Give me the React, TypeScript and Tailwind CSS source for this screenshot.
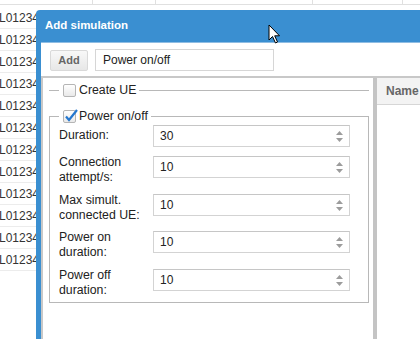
import React from 'react';

const bgRows = Array.from({ length: 12 });

const Checkbox: React.FC<{ checked?: boolean }> = ({ checked }) => (
  <span className="relative inline-block w-[13px] h-[13px] border border-[#b5b5b5] rounded-[2px] bg-gradient-to-b from-[#ffffff] to-[#e9e9e9]">
    {checked && (
      <svg className="absolute left-[0px] top-[-3px]" width="15" height="15" viewBox="0 0 15 15">
        <path d="M2 8.5 L5 12 L13 2" fill="none" stroke="#2477cf" strokeWidth="2.2" />
      </svg>
    )}
  </span>
);

const Spinner: React.FC<{ value: string }> = ({ value }) => (
  <div className="w-[197px] h-[22px] border border-[#d3d3d3] border-t-[#c6c6c6] flex items-center justify-between pl-[6px] pr-[6px] text-[12px] text-[#222]">
    <span>{value}</span>
    <svg width="7" height="11" viewBox="0 0 7 11">
      <polygon points="3.5,0 7,4 0,4" fill="#9c9c9c" />
      <polygon points="0,7 7,7 3.5,11" fill="#9c9c9c" />
    </svg>
  </div>
);

const fields = [
  { label: ['Duration:'], value: '30', h: 'h-[31px]' },
  { label: ['Connection', 'attempt/s:'], value: '10', h: 'h-[38px]' },
  { label: ['Max simult.', 'connected UE:'], value: '10', h: 'h-[37px]' },
  { label: ['Power on', 'duration:'], value: '10', h: 'h-[38px]' },
  { label: ['Power off', 'duration:'], value: '10', h: 'h-[22px]' },
];

export default function App() {
  return (
    <div className="relative w-[420px] h-[339px] overflow-hidden bg-white font-['Liberation_Sans',Arial,sans-serif]">
      {/* Grid behind the window */}
      <div>
        <div className="h-[5px] flex border-b border-[#e0e0e0]">
          <div className="w-[93px] border-r border-[#e0e0e0]" />
          <div className="w-[63px] border-r border-[#e0e0e0]" />
          <div className="w-[157px] border-r border-[#e0e0e0]" />
          <div className="w-[90px] border-r border-[#e0e0e0]" />
        </div>
        {bgRows.map((_, i) => (
          <div
            key={i}
            className={`${i === 0 ? 'h-[24px] pt-[2px]' : 'h-[22px]'} flex items-center border-b border-[#ececec] text-[12px] text-[#333] whitespace-nowrap`}
          >
            <span className="-ml-[1px]">L01234</span>
          </div>
        ))}
      </div>

      {/* Add simulation window */}
      <div className="absolute left-[36px] top-[10px] w-[400px] h-[329px] bg-[#3a8fd1] rounded-tl-[4px] pl-[5px] flex flex-col">
        <div className="h-[33px] flex items-center pl-[4px] text-white font-bold text-[11.5px] border-b border-[#8fbde3]">
          Add simulation
        </div>
        <div className="flex-1 bg-white flex flex-col">
          <div className="h-[33px] flex items-start pt-[6px] pl-[9px] gap-[7px]">
            <button className="mt-[1px] w-[38px] h-[21px] border border-[#d9d9d9] rounded-[2px] bg-gradient-to-b from-[#f8f8f8] to-[#e7e7e7] text-[11px] font-bold text-[#666]">
              Add
            </button>
            <div className="w-[179px] h-[22px] border border-[#d6d6d6] pl-[7px] flex items-center text-[12px] text-[#222]">
              Power on/off
            </div>
          </div>

          <div className="flex-1 flex border-t-2 border-l-2 border-[#c8c8c8]">
            {/* Form */}
            <div className="w-[330px] pl-[6px] pr-[4px]">
              <fieldset className="mt-[5px] border-0 border-t border-[#b8b8b8] px-[10px]">
                <legend className="pl-[4px] pr-[3px] h-[14px] flex items-center gap-[3px] text-[12.3px] text-[#222]">
                  <Checkbox />
                  <span>Create UE</span>
                </legend>
              </fieldset>

              <fieldset className="mt-[12px] border border-[#b8b8b8] px-[9px] pt-[2px] pb-[11px]">
                <legend className="pl-[4px] pr-[3px] h-[14px] flex items-center gap-[3px] text-[12.3px] text-[#222]">
                  <Checkbox checked />
                  <span>Power on/off</span>
                </legend>
                {fields.map((f) => (
                  <div key={f.label.join(' ')} className={`flex items-start ${f.h}`}>
                    <div
                      className={`w-[94px] text-[12.3px] leading-[15px] text-[#222] ${f.label.length === 1 ? 'pt-[3px]' : '-mt-[1px]'}`}
                    >
                      {f.label.map((l) => (
                        <div key={l}>{l}</div>
                      ))}
                    </div>
                    <Spinner value={f.value} />
                  </div>
                ))}
              </fieldset>
            </div>

            <div className="w-[4px] bg-[#c4c4c4]" />

            {/* Grid */}
            <div className="flex-1">
              <div className="h-[27px] bg-[#f3f3f3] border-b border-[#d6d6d6] pl-[9px] flex items-center text-[12px] font-bold text-[#666]">
                Name
              </div>
            </div>
          </div>
        </div>
      </div>

      {/* Mouse pointer */}
      <svg className="absolute left-[268px] top-[24px]" width="14" height="21" viewBox="0 0 14 21">
        <path d="M1 1 L1 16 L4.5 12.5 L7.5 19 L9.5 18 L6.7 11.8 L11.5 11.8 Z" fill="#fff" stroke="#000" strokeWidth="1" strokeLinejoin="round" />
      </svg>
    </div>
  );
}
